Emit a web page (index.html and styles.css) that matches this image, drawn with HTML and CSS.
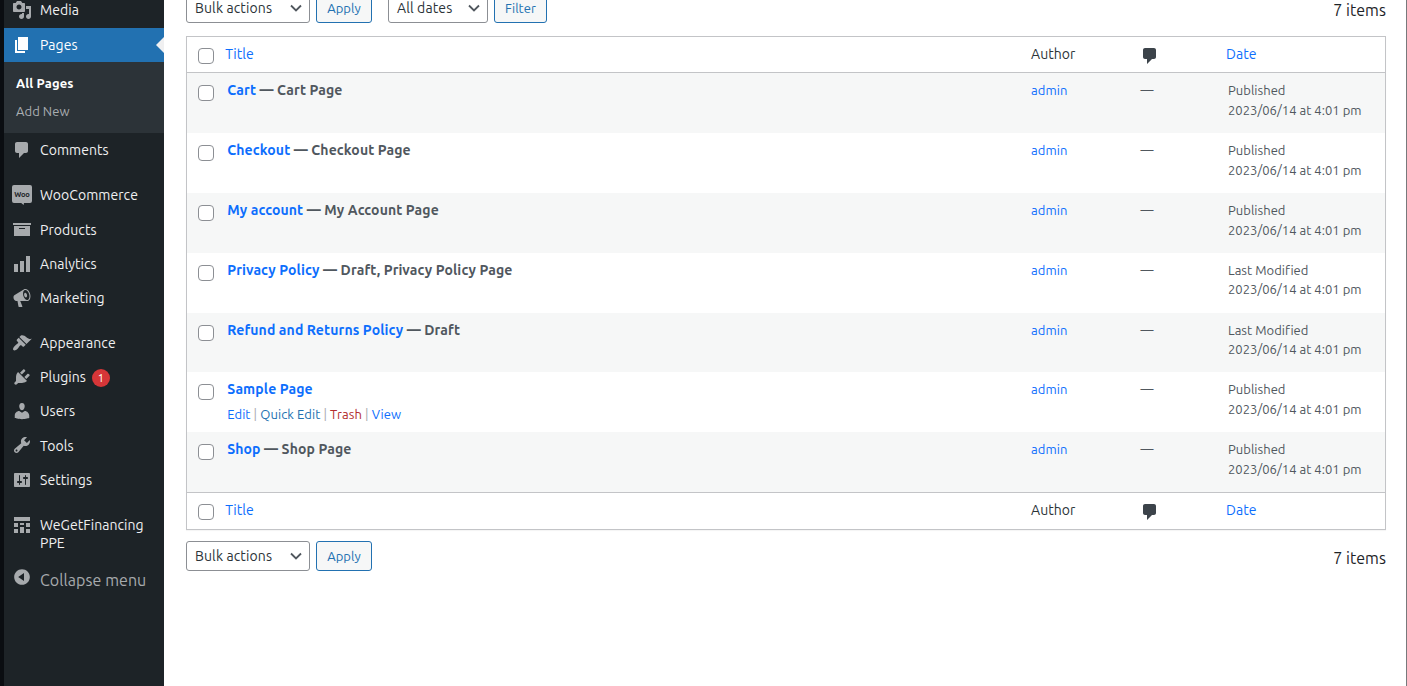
FILE: index.html
```html
<!DOCTYPE html>
<html lang="en">
<head>
<meta charset="utf-8">
<title>Pages</title>
<link rel="stylesheet" href="styles.css">
</head>
<body>
<div class="app">
  <nav class="menu">
    <a class="item"><svg class="icon" viewBox="0 0 20 20"><path d="M13 11V4c0-.55-.45-1-1-1h-1.67L9 1H5L3.67 3H2c-.55 0-1 .45-1 1v7c0 .55.45 1 1 1h10c.55 0 1-.45 1-1zM7 4.5c1.38 0 2.5 1.12 2.5 2.5S8.38 9.5 7 9.5 4.500 8.38 4.500 7 5.620 4.500 7 4.500zM14 6h5v10.500c0 1.380-1.120 2.500-2.500 2.500S14 17.880 14 16.500s1.120-2.500 2.500-2.500c.17 0 .34.02.5.05V9h-3V6zm-4 8.050V13h2v3.500c0 1.380-1.120 2.500-2.500 2.500S7 17.880 7 16.500 8.120 14 9.500 14c.17 0 .34.02.5.05z"/></svg><span>Media</span></a>
    <a class="item current"><svg class="icon" viewBox="0 0 20 20"><path d="M6 15V2h10v13H6zm-1 1h8v2H3V5h2v11z"/></svg><span>Pages</span></a>
    <div class="submenu"><a class="active">All Pages</a><a>Add New</a></div>
    <a class="item"><svg class="icon" viewBox="0 0 20 20"><path d="M5 2h9c1.100 0 2 .9 2 2v7c0 1.100-.9 2-2 2h-2l-5 5v-5H5c-1.100 0-2-.9-2-2V4c0-1.100.9-2 2-2z"/></svg><span>Comments</span></a>
    <a class="item group"><svg class="icon woo" viewBox="0 0 20 20"><path d="M2 0h16a2 2 0 0 1 2 2v14a2 2 0 0 1-2 2h-6l-.4 2-2.400-2H2a2 2 0 0 1-2-2V2a2 2 0 0 1 2-2z"/><text x="10" y="11.500" text-anchor="middle">Woo</text></svg><span>WooCommerce</span></a>
    <a class="item"><svg class="icon" viewBox="0 0 20 20"><path d="M19 4v2H1V4h18zM2 7h16v10H2V7zm11 3V9H7v1h6z"/></svg><span>Products</span></a>
    <a class="item"><svg class="icon" viewBox="0 0 20 20"><path d="M18 18V2h-4v16h4zm-6 0V7H8v11h4zm-6 0v-8H2v8h4z"/></svg><span>Analytics</span></a>
    <a class="item"><svg class="icon" viewBox="0 0 20 20"><path d="M18.150 5.940c.46 1.620.38 3.220-.02 4.480-.42 1.280-1.260 2.180-2.300 2.480-.16.06-.26.06-.4.06-.06.02-.12.02-.18.02-.06.02-.14.02-.22.02h-6.800l2.220 5.500c.02.14-.06.26-.14.34-.08.1-.24.16-.34.16H6.950c-.1 0-.26-.06-.34-.16-.08-.08-.16-.2-.14-.34l-1-5.500H4.250l-.02-.02c-.5.06-1.080-.18-1.540-.62s-.88-1.080-1.060-1.880c-.24-.8-.2-1.560-.02-2.200.18-.62.58-1.080 1.060-1.300l.02-.02 9-5.400c.1-.06.18-.1.24-.16.06-.04.14-.08.24-.12.16-.08.28-.12.5-.18 1.040-.3 2.240.1 3.220.98s1.840 2.240 2.260 3.860zm-2.580 5.980h-.02c.4-.1.74-.34 1.040-.7.58-.7.86-1.760.86-3.040 0-.64-.1-1.300-.28-1.980-.34-1.360-1.020-2.500-1.780-3.240s-1.680-1.100-2.460-.88c-.82.22-1.400.96-1.700 2-.32 1.040-.28 2.360.06 3.720.38 1.360 1 2.500 1.800 3.240.78.74 1.620 1.100 2.480.88zm-2.540-7.080c.22-.04.42-.02.62.04.38.16.76.48 1.020 1s.42 1.200.42 1.780c0 .3-.04.56-.12.8-.18.48-.44.84-.86.94-.34.1-.8-.06-1.140-.4s-.64-.86-.78-1.500c-.18-.62-.12-1.240.02-1.720s.48-.84.82-.94z"/></svg><span>Marketing</span></a>
    <a class="item group"><svg class="icon" viewBox="0 0 20 20"><path d="M14.480 11.060L7.410 3.990l1.500-1.500c.5-.56 2.300-.47 3.510.32 1.210.8 1.430 1.280 2.910 2.100 1.180.64 2.450 1.260 4.450.85zm-.71.71L6.700 4.700 4.930 6.470c-.39.39-.39 1.020 0 1.410l1.060 1.060c.39.39.39 1.030 0 1.420-.6.6-1.430 1.110-2.210 1.690-.35.26-.7.53-1.010.84C1.430 14.230.4 16.080 1.400 17.070c.99 1 2.840-.03 4.180-1.360.31-.31.58-.66.85-1.020.57-.78 1.080-1.610 1.690-2.210.39-.39 1.020-.39 1.410 0l1.060 1.060c.39.39 1.020.39 1.410 0z"/></svg><span>Appearance</span></a>
    <a class="item"><svg class="icon" viewBox="0 0 20 20"><path d="M13.110 4.360L9.870 7.600 8 5.730l3.240-3.240c.35-.34 1.050-.2 1.560.32.52.51.66 1.210.31 1.550zm-8 1.770l.91-1.120 9.010 9.010-1.190.84c-.71.71-2.630 1.160-3.820 1.160H6.140L4.900 17.260c-.59.59-1.540.59-2.120 0-.59-.58-.59-1.530 0-2.120l1.240-1.240v-3.880c0-1.130.4-3.190 1.090-3.890zm7.260 3.970l3.240-3.240c.34-.35 1.040-.21 1.550.31.52.51.66 1.210.31 1.550l-3.240 3.250z"/></svg><span>Plugins</span><b class="count">1</b></a>
    <a class="item"><svg class="icon" viewBox="0 0 20 20"><path d="M10 9.250c-2.270 0-2.730-3.440-2.730-3.440C7 4.020 7.820 2 9.970 2c2.160 0 2.980 2.020 2.710 3.810 0 0-.41 3.440-2.680 3.440zm0 2.570L12.720 10c2.390 0 4.520 2.330 4.520 4.530v2.490s-3.650 1.130-7.240 1.130c-3.650 0-7.240-1.130-7.240-1.130v-2.490c0-2.250 1.940-4.480 4.470-4.480z"/></svg><span>Users</span></a>
    <a class="item"><svg class="icon" viewBox="0 0 20 20"><path d="M16.680 9.770c-1.340 1.340-3.300 1.670-4.950.99l-5.410 6.520c-.99.99-2.590.99-3.580 0s-.99-2.590 0-3.570l6.520-5.420c-.68-1.650-.35-3.610.99-4.950 1.280-1.280 3.120-1.620 4.720-1.060l-2.890 2.890 2.820 2.820 2.860-2.870c.53 1.580.18 3.390-1.080 4.650zM3.810 16.210c.4.39 1.040.39 1.430 0 .4-.4.4-1.040 0-1.430-.39-.4-1.030-.4-1.430 0-.39.39-.39 1.030 0 1.430z"/></svg><span>Tools</span></a>
    <a class="item"><svg class="icon" viewBox="0 0 20 20"><path d="M18 16V4c0-.55-.45-1-1-1H3c-.55 0-1 .45-1 1v12c0 .55.45 1 1 1h14c.55 0 1-.45 1-1zM8 11h1c.55 0 1 .45 1 1s-.45 1-1 1H8v1.500c0 .28-.22.5-.5.5s-.5-.22-.5-.5V13H6c-.55 0-1-.45-1-1s.45-1 1-1h1V5.500c0-.28.22-.5.5-.5s.5.22.5.5V11zm5-2h-1c-.55 0-1-.45-1-1s.45-1 1-1h1V5.500c0-.28.22-.5.5-.5s.5.22.5.5V7h1c.55 0 1 .45 1 1s-.45 1-1 1h-1v5.500c0 .28-.22.5-.5.5s-.5-.22-.5-.5V9z"/></svg><span>Settings</span></a>
    <a class="item group two-line"><svg class="icon" viewBox="0 0 20 20"><path d="M2 2h16v4H2zM2 8h4v4H2zM8 8h4v2H8zM14 8h4v4h-4zM8 12h4v6H8zM2 14h4v4H2zM14 14h4v4h-4z"/></svg><span>WeGetFinancing<br>PPE</span></a>
    <a class="item collapse"><svg class="icon" viewBox="0 0 20 20"><path d="M10 2.160c4.330 0 7.840 3.510 7.840 7.840s-3.510 7.840-7.840 7.840S2.160 14.330 2.160 10 5.710 2.160 10 2.160zm2 11.720V6.120L6.180 9.970z"/></svg><span>Collapse menu</span></a>
  </nav>
  <main class="content">
    <div class="toolbar top">
      <div class="select bulk"><span>Bulk actions</span><svg class="chevron" viewBox="0 0 12 8"><path d="M1 1.500l5 5 5-5"/></svg></div>
      <div class="button apply">Apply</div>
      <div class="select dates"><span>All dates</span><svg class="chevron" viewBox="0 0 12 8"><path d="M1 1.500l5 5 5-5"/></svg></div>
      <div class="button filter">Filter</div>
      <span class="total">7 items</span>
    </div>
    <section class="table">
      <div class="row head"><i class="box"></i><a>Title</a><span>Author</span><svg class="bubble" viewBox="0 0 20 20"><path d="M5 2h9c1.100 0 2 .9 2 2v7c0 1.100-.9 2-2 2h-2l-5 5v-5H5c-1.100 0-2-.9-2-2V4c0-1.100.9-2 2-2z"/></svg><a>Date</a></div>
      <div class="row"><i class="box"></i><div class="title"><p><a>Cart</a> — Cart Page</p></div><a>admin</a><span class="none">—</span><div class="date">Published<br>2023/06/14 at 4:01 pm</div></div>
      <div class="row"><i class="box"></i><div class="title"><p><a>Checkout</a> — Checkout Page</p></div><a>admin</a><span class="none">—</span><div class="date">Published<br>2023/06/14 at 4:01 pm</div></div>
      <div class="row"><i class="box"></i><div class="title"><p><a>My account</a> — My Account Page</p></div><a>admin</a><span class="none">—</span><div class="date">Published<br>2023/06/14 at 4:01 pm</div></div>
      <div class="row"><i class="box"></i><div class="title"><p><a>Privacy Policy</a> — Draft, Privacy Policy Page</p></div><a>admin</a><span class="none">—</span><div class="date">Last Modified<br>2023/06/14 at 4:01 pm</div></div>
      <div class="row"><i class="box"></i><div class="title"><p><a>Refund and Returns Policy</a> — Draft</p></div><a>admin</a><span class="none">—</span><div class="date">Last Modified<br>2023/06/14 at 4:01 pm</div></div>
      <div class="row"><i class="box"></i><div class="title"><p><a>Sample Page</a></p><div class="actions"><a>Edit</a> | <a class="quick">Quick Edit</a> | <a class="trash">Trash</a> | <a>View</a></div></div><a>admin</a><span class="none">—</span><div class="date">Published<br>2023/06/14 at 4:01 pm</div></div>
      <div class="row"><i class="box"></i><div class="title"><p><a>Shop</a> — Shop Page</p></div><a>admin</a><span class="none">—</span><div class="date">Published<br>2023/06/14 at 4:01 pm</div></div>
      <div class="row head foot"><i class="box"></i><a>Title</a><span>Author</span><svg class="bubble" viewBox="0 0 20 20"><path d="M5 2h9c1.100 0 2 .9 2 2v7c0 1.100-.9 2-2 2h-2l-5 5v-5H5c-1.100 0-2-.9-2-2V4c0-1.100.9-2 2-2z"/></svg><a>Date</a></div>
    </section>
    <div class="toolbar bottom">
      <div class="select bulk"><span>Bulk actions</span><svg class="chevron" viewBox="0 0 12 8"><path d="M1 1.500l5 5 5-5"/></svg></div>
      <div class="button apply">Apply</div>
      <span class="total">7 items</span>
    </div>
  </main>
</div>
</body>
</html>
```
FILE: styles.css
```css
* { box-sizing: border-box; }
body { margin: 0; background: #fff; color: #2c3338; font: 14px/18px Ubuntu, "Noto Sans", sans-serif; letter-spacing: .06px; overflow: hidden; }
p { margin: 0; }
.app { display: flex; width: 1407px; height: 686px; overflow: hidden; border-right: 1px solid #77797c; }
.menu { flex: none; width: 164px; height: 686px; border-left: 4px solid #0a0d11; background: #1d2327; display: flex; flex-direction: column; }
.item { flex: none; display: flex; height: 34.18px; padding: 8.2px 0 0 8px; color: #f0f0f1; position: relative; }
.menu > :first-child { margin-top: -6.5px; height: 34.5px; padding-top: 7.5px; }
.icon { flex: none; width: 20px; height: 20px; margin: -1.2px 8px 0 0; fill: #a7aaad; }
.group { margin-top: 11px; }
.woo { overflow: visible; }
.woo text { font: bold 7.5px Ubuntu, "Noto Sans", sans-serif; letter-spacing: -.2px; fill: #1d2327; }
.current { height: 34px; background: #2271b1; color: #fff; }
.current .icon { fill: #fff; }
.current::after { content: ""; position: absolute; right: 0; top: 9px; border: 8px solid transparent; border-left: 0; border-right-color: #f0f0f1; }
.submenu { flex: none; height: 71px; background: #2c3338; padding: 12px; display: flex; flex-direction: column; gap: 10px; color: #a9adb0; font-size: 13px; }
.submenu .active { color: #fff; font-weight: 700; letter-spacing: .12px; }
.count { width: 18px; height: 18px; margin: .5px 0 0 6px; border-radius: 9px; background: #d63638; color: #fff; font-size: 11px; font-weight: 400; text-align: center; }
.two-line { height: 52.5px; }
.collapse { height: 40px; padding-top: 10.6px; color: #a7aaad; font-size: 16px; }
.collapse .icon { margin-top: -4px; }
.content { width: 1200px; margin-left: 22px; }
.toolbar { display: flex; height: 30px; }
.top { margin-top: -7px; }
.bottom { margin-top: 11px; }
.select { width: 124px; height: 30px; display: flex; align-items: center; justify-content: space-between; border: 1px solid #8c8f94; border-radius: 3px; padding: 0 7px 0 8px; letter-spacing: .12px; }
.chevron { width: 12px; height: 8px; fill: none; stroke: #50575e; stroke-width: 1.8; }
.dates { width: 100px; margin-left: 16px; }
.button { height: 30px; width: 56px; margin-left: 6px; border: 1px solid #2271b1; border-radius: 3px; background: #f6f7f7; color: #2271b1; font-size: 13px; line-height: 28px; text-align: center; }
.filter { width: 53px; }
.total { margin-left: auto; padding-top: 8px; color: #1d2327; font-size: 16px; line-height: 18px; }
.table { margin-top: 13px; border: 1px solid #c3c4c7; height: 494px; box-shadow: 0 1px 1px rgba(0,0,0,.04); }
.row { display: grid; grid-template-columns: 40.2px 803.8px 109.5px 87.5px 1fr; height: 59.89px; padding-top: 8px; font-size: 13px; color: #50575e; }
.row:nth-child(even) { background: #f6f7f7; }
.row a { color: #0d6efd; }
.head { height: 36px; border-bottom: 1px solid #c3c4c7; color: #2c3338; font-size: 14px; }
.foot { height: 37px; border-top: 1px solid #c3c4c7; border-bottom: 0; }
.head a { margin-left: -2px; }
.box { width: 16px; height: 16px; margin: 4px 0 0 11px; border: 1px solid #8c8f94; border-radius: 4px; background: #fff; }
.head .box { margin-top: 3px; }
.bubble { width: 20px; height: 20px; fill: #3c434a; margin: 1px 0 0 -.4px; }
.title { font-size: 14px; font-weight: 700; letter-spacing: .12px; }
.actions { margin-top: 8px; font-size: 13px; line-height: 16px; font-weight: 400; letter-spacing: .08px; color: #a7aaad; }
.none { margin-top: -1px; }
.row .quick { color: #2271b1; }
.row .trash { color: #b32d2e; }
.date { line-height: 19.65px; padding-top: .1px; letter-spacing: .03px; }
```
